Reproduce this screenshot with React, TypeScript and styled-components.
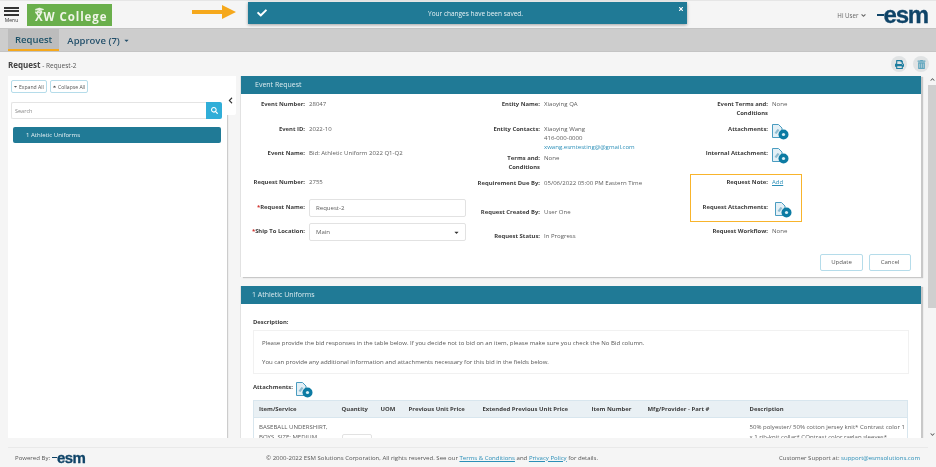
import { createGlobalStyle, styled } from 'styled-components';
import {
  FaAngleDown,
  FaCaretDown,
  FaCaretUp,
  FaCheck,
  FaChevronDown,
  FaChevronLeft,
  FaChevronUp,
  FaGraduationCap,
  FaPrint,
  FaSearch,
  FaTimes,
  FaTrashAlt,
} from 'react-icons/fa';

const GlobalStyle = createGlobalStyle`
  html, body { margin: 0; padding: 0; background: #f5f5f5; }
  * { box-sizing: border-box; }
  body { font-family: "Open Sans", "Noto Sans", sans-serif; font-size: 6.05px; color: #555; }
`;

function EsmLogo({ small }: { small?: boolean }) {
  return (
    <LogoWrap $small={small}>
      <LogoDash $small={small} />
      esm
    </LogoWrap>
  );
}

function AttachIcon({ shift }: { shift?: number }) {
  return (
    <AttachSvg $shift={shift} width="17" height="16" viewBox="0 0 17 16">
      <path d="M.5.5h6L10 4v9.5H.5z" fill="#e4f0f6" stroke="#4a9cc0" strokeWidth="1" />
      <path d="M2.5 9l3-4 2 1-3 4z" fill="#8dbbd0" />
      <circle cx="11.5" cy="10.5" r="5" fill="#0c7ba3" />
      <circle cx="11.5" cy="10.5" r="1.6" fill="#d8edf5" />
    </AttachSvg>
  );
}

function App() {
  return (
    <Page>
      <GlobalStyle />
      <Header>
        <MenuButton>
          <Burger />
          <Burger />
          <Burger />
          <MenuLabel>Menu</MenuLabel>
        </MenuButton>
        <CollegeLogo>
          <CapIcon>
            <FaGraduationCap size={9} color="#e6efdc" />
          </CapIcon>
          XW College
        </CollegeLogo>
        <HeaderRight>
          <HiUser>
            Hi User <FaAngleDown size={7} />
          </HiUser>
          <EsmLogo />
        </HeaderRight>
        <Arrow width="44" height="14" viewBox="0 0 44 14">
          <path d="M0 5h30V0l14 7-14 7V9H0z" fill="#f5a81c" />
        </Arrow>
        <Toast>
          <FaCheck size={10} color="#fff" />
          <ToastText>Your changes have been saved.</ToastText>
          <ToastClose>
            <FaTimes size={6} color="#fff" />
          </ToastClose>
        </Toast>
      </Header>

      <Nav>
        <NavItem $active>Request</NavItem>
        <NavItem>
          Approve (7) <FaCaretDown size={7} />
        </NavItem>
      </Nav>

      <TitleRow>
        <PageTitle>
          <strong>Request</strong> - Request-2
        </PageTitle>
        <RoundButtons>
          <RoundButton>
            <FaPrint size={9} color="#1c7d9f" />
          </RoundButton>
          <RoundButton>
            <FaTrashAlt size={9} color="#5fa6be" />
          </RoundButton>
        </RoundButtons>
      </TitleRow>

      <Body>
        <Sidebar>
          <ToolRow>
            <ToolButton $w={36}>
              <FaCaretDown size={5} /> Expand All
            </ToolButton>
            <ToolButton $w={38}>
              <FaCaretUp size={5} /> Collapse All
            </ToolButton>
          </ToolRow>
          <SearchRow>
            <SearchInput>Search</SearchInput>
            <SearchButton>
              <FaSearch size={7} color="#fff" />
            </SearchButton>
          </SearchRow>
          <TreeItem>1 Athletic Uniforms</TreeItem>
        </Sidebar>

        <CollapseGutter>
          <CollapseTab>
            <FaChevronLeft size={7} color="#333" />
          </CollapseTab>
        </CollapseGutter>

        <Main>
          <Panel>
            <PanelHead $indent={14}>Event Request</PanelHead>
            <FormGrid>
              <FormColumn $labelW={64}>
                <Field $h={25}>
                  <Label>Event Number:</Label>
                  <Value>28047</Value>
                </Field>
                <Field $h={24}>
                  <Label>Event ID:</Label>
                  <Value>2022-10</Value>
                </Field>
                <Field $h={29}>
                  <Label>Event Name:</Label>
                  <Value>Bid: Athletic Uniform 2022 Q1-Q2</Value>
                </Field>
                <Field $h={25}>
                  <Label>Request Number:</Label>
                  <Value>2755</Value>
                </Field>
                <Field $h={24}>
                  <Label>
                    <Required>*</Required>Request Name:
                  </Label>
                  <TextBox>Request-2</TextBox>
                </Field>
                <Field $h={20}>
                  <Label>
                    <Required>*</Required>Ship To Location:
                  </Label>
                  <TextBox>
                    Main
                    <FaCaretDown size={7} color="#333" />
                  </TextBox>
                </Field>
              </FormColumn>

              <FormColumn $labelW={74}>
                <Field $h={25}>
                  <Label>Entity Name:</Label>
                  <Value>Xiaoying QA</Value>
                </Field>
                <Field $h={29}>
                  <Label>Entity Contacts:</Label>
                  <Value>
                    Xiaoying Wang
                    <br />
                    416-000-0000
                    <br />
                    <MailLink>xwang.esmtesting@@gmail.com</MailLink>
                  </Value>
                </Field>
                <Field $h={25}>
                  <Label>
                    Terms and:
                    <br />
                    Conditions
                  </Label>
                  <Value>None</Value>
                </Field>
                <Field $h={29}>
                  <Label>Requirement Due By:</Label>
                  <Value>05/06/2022 05:00 PM Eastern Time</Value>
                </Field>
                <Field $h={24}>
                  <Label>Request Created By:</Label>
                  <Value>User One</Value>
                </Field>
                <Field $h={16}>
                  <Label>Request Status:</Label>
                  <Value>In Progress</Value>
                </Field>
              </FormColumn>

              <FormColumn $labelW={67}>
                <Field $h={25}>
                  <Label>
                    Event Terms and:
                    <br />
                    Conditions
                  </Label>
                  <Value>None</Value>
                </Field>
                <Field $h={24}>
                  <Label>Attachments:</Label>
                  <AttachIcon />
                </Field>
                <Field $h={29}>
                  <Label>Internal Attachment:</Label>
                  <AttachIcon />
                </Field>
                <Highlighted>
                  <Field $h={25}>
                    <Label>Request Note:</Label>
                    <AddLink>Add</AddLink>
                  </Field>
                  <Field $h={24}>
                    <Label>Request Attachments:</Label>
                    <AttachIcon shift={3} />
                  </Field>
                </Highlighted>
                <Field $h={16}>
                  <Label>Request Workflow:</Label>
                  <Value>None</Value>
                </Field>
              </FormColumn>
            </FormGrid>
            <Actions>
              <ActionButton $w={43}>Update</ActionButton>
              <ActionButton $w={42}>Cancel</ActionButton>
            </Actions>
          </Panel>

          <Panel>
            <PanelHead $indent={11}>1 Athletic Uniforms</PanelHead>
            <PanelBody>
              <SectionLabel>Description:</SectionLabel>
              <DescriptionBox>
                <p>
                  Please provide the bid responses in the table below. If you decide not to bid on an
                  item, please make sure you check the No Bid column.
                </p>
                <p>
                  You can provide any additional information and attachments necessary for this bid in
                  the fields below.
                </p>
              </DescriptionBox>
              <AttachRow>
                <SectionLabel>Attachments:</SectionLabel>
                <AttachIcon />
              </AttachRow>
              <ItemTable>
                <thead>
                  <tr>
                    <Th $w={83}>Item/Service</Th>
                    <Th $w={39}>Quantity</Th>
                    <Th $w={28}>UOM</Th>
                    <Th $w={74}>Previous Unit Price</Th>
                    <Th $w={109}>Extended Previous Unit Price</Th>
                    <Th $w={56}>Item Number</Th>
                    <Th $w={102}>Mfg/Provider - Part #</Th>
                    <Th>Description</Th>
                  </tr>
                </thead>
                <tbody>
                  <tr>
                    <Td>
                      BASEBALL UNDERSHIRT,
                      <br />
                      BOYS, SIZE: MEDIUM
                    </Td>
                    <Td>
                      <QtyBox />
                    </Td>
                    <Td />
                    <Td />
                    <Td />
                    <Td />
                    <Td />
                    <Td>
                      50% polyester/ 50% cotton jersey knit* Contrast color 1
                      <br />x 1 rib-knit collar* COntrast color raglan sleeves*
                    </Td>
                  </tr>
                </tbody>
              </ItemTable>
            </PanelBody>
          </Panel>
        </Main>

        <Scrollbar>
          <FaChevronUp size={5} color="#555" />
          <ScrollThumb />
          <ScrollDown>
            <FaChevronDown size={5} color="#555" />
          </ScrollDown>
        </Scrollbar>
      </Body>

      <Footer>
        <PoweredBy>
          Powered By: <EsmLogo small />
        </PoweredBy>
        <div>
          © 2000-2022 ESM Solutions Corporation, All rights reserved. See our{' '}
          <FooterLink>Terms &amp; Conditions</FooterLink> and <FooterLink>Privacy Policy</FooterLink>{' '}
          for details.
        </div>
        <div>
          Customer Support at: <MailLink>support@esmsolutions.com</MailLink>
        </div>
      </Footer>
    </Page>
  );
}

const Page = styled.div`
  width: 936px;
  height: 467px;
  overflow: hidden;
  display: flex;
  flex-direction: column;
  background: #f5f5f5;
  filter: blur(0.4px);
`;
const Header = styled.header`
  position: relative;
  height: 28px;
  flex: none;
  display: flex;
  align-items: center;
  padding: 1px 0 0 4px;
  border-top: 1px solid #e6e6e6;
`;
const MenuButton = styled.div`
  width: 15px;
  display: flex;
  flex-direction: column;
  align-items: center;
  gap: 1.5px;
`;
const Burger = styled.span`
  display: block;
  width: 15px;
  height: 2px;
  background: #333;
`;
const MenuLabel = styled.span`
  font-size: 5px;
  line-height: 6px;
  color: #333;
`;
const CollegeLogo = styled.div`
  position: relative;
  margin-left: 8px;
  width: 85px;
  height: 22px;
  background: #6aaf4c;
  color: #f0f5e8;
  font-weight: 700;
  font-size: 11.5px;
  letter-spacing: 0.9px;
  line-height: 25px;
  padding-left: 8px;
  white-space: nowrap;
`;
const CapIcon = styled.span`
  position: absolute;
  left: 8px;
  top: 2px;
  line-height: 0;
`;
const HeaderRight = styled.div`
  margin-left: auto;
  margin-right: 8px;
  display: flex;
  align-items: center;
  gap: 10px;
`;
const HiUser = styled.span`
  display: flex;
  align-items: center;
  gap: 1px;
  font-size: 6.2px;
  color: #666;
`;
const LogoWrap = styled.span<{ $small?: boolean }>`
  display: inline-flex;
  align-items: center;
  font-family: "Liberation Sans", sans-serif;
  font-weight: 700;
  font-size: ${({ $small }) => ($small ? '15px' : '24px')};
  line-height: ${({ $small }) => ($small ? '12px' : '18px')};
  letter-spacing: ${({ $small }) => ($small ? '-0.6px' : '-1.2px')};
  -webkit-text-stroke: 0.3px #0f4468;
  color: #0f4468;
`;
const LogoDash = styled.i<{ $small?: boolean }>`
  display: block;
  width: ${({ $small }) => ($small ? '5px' : '7px')};
  height: ${({ $small }) => ($small ? '1.5px' : '2.5px')};
  background: #0f4468;
`;
const Arrow = styled.svg`
  position: absolute;
  left: 192px;
  top: 4px;
`;
const Toast = styled.div`
  position: absolute;
  left: 248px;
  top: 1px;
  width: 439px;
  height: 22px;
  background: #207a96;
  box-shadow: 0 1px 3px rgba(0, 0, 0, 0.35);
  display: flex;
  align-items: center;
  padding-left: 9px;
`;
const ToastText = styled.span`
  position: absolute;
  left: 180px;
  color: #e8f2f5;
  font-size: 6.5px;
`;
const ToastClose = styled.span`
  position: absolute;
  right: 3px;
  top: 4px;
  line-height: 0;
`;
const Nav = styled.nav`
  height: 24px;
  flex: none;
  background: #cdcdcd;
  border-top: 1px solid #c4c4c4;
  border-bottom: 1px solid #c4c4c4;
  display: flex;
  padding-left: 8px;
`;
const NavItem = styled.div<{ $active?: boolean }>`
  padding: 0 ${({ $active }) => ($active ? '7px' : '8px')};
  display: flex;
  align-items: center;
  gap: 3px;
  font-size: 9.5px;
  font-weight: 600;
  color: ${({ $active }) => ($active ? '#1d5268' : '#24506b')};
  background: ${({ $active }) => ($active ? '#bcbcbc' : 'transparent')};
  border-bottom: ${({ $active }) => ($active ? '2px solid #f5a81c' : '0')};
`;
const TitleRow = styled.div`
  height: 24px;
  flex: none;
  display: flex;
  align-items: center;
  justify-content: space-between;
  padding: 0 7px 0 8px;
`;
const PageTitle = styled.div`
  font-size: 6.5px;
  color: #555;
  strong {
    font-size: 8px;
    font-weight: 700;
    color: #444;
  }
`;
const RoundButtons = styled.div`
  display: flex;
  gap: 6px;
`;
const RoundButton = styled.span`
  width: 16px;
  height: 16px;
  border-radius: 50%;
  background: #e0e3e4;
  display: flex;
  align-items: center;
  justify-content: center;
`;
const Body = styled.div`
  height: 362px;
  flex: none;
  display: flex;
  align-items: flex-start;
  padding-left: 8px;
  margin-bottom: 9px;
  overflow: hidden;
`;
const Sidebar = styled.aside`
  width: 219px;
  height: 362px;
  flex: none;
  background: #fff;
  box-shadow: 1px 1px 1px #ccc;
  padding: 4px 3px 0;
`;
const ToolRow = styled.div`
  display: flex;
  gap: 3px;
`;
const ToolButton = styled.span<{ $w: number }>`
  width: ${({ $w }) => $w}px;
  display: flex;
  align-items: center;
  gap: 1px;
  height: 13px;
  padding: 0 1px;
  font-size: 5.1px;
  white-space: nowrap;
  color: #555;
  border: 1px solid #b5dcea;
  border-radius: 2px;
`;
const SearchRow = styled.div`
  display: flex;
  margin-top: 9px;
  width: 211px;
`;
const SearchInput = styled.div`
  flex: 1;
  height: 17px;
  line-height: 16px;
  padding-left: 3px;
  font-size: 5.5px;
  color: #888;
  border: 1px solid #e4e4e4;
  border-right: 0;
  border-radius: 2px 0 0 2px;
`;
const SearchButton = styled.span`
  width: 16px;
  height: 17px;
  background: #30aed8;
  border-radius: 0 2px 2px 0;
  display: flex;
  align-items: center;
  justify-content: center;
`;
const TreeItem = styled.div`
  margin: 8px 0 0 2px;
  width: 208px;
  height: 16px;
  line-height: 16px;
  padding-left: 13px;
  background: #207a96;
  border-radius: 2px;
  color: #e8f2f5;
`;
const CollapseGutter = styled.div`
  width: 14px;
  flex: none;
`;
const CollapseTab = styled.div`
  width: 9px;
  height: 39px;
  background: #fff;
  border-radius: 0 0 2px 0;
  display: flex;
  align-items: flex-end;
  justify-content: flex-start;
  padding: 0 0 11px 0;
  line-height: 0;
`;
const Main = styled.main`
  width: 680px;
  flex: none;
  display: flex;
  flex-direction: column;
  gap: 9px;
`;
const Panel = styled.section`
  background: #fff;
  box-shadow: 2px 1px 1px #c8c8c8, -1px 0 0 #e2e2e2;
`;
const PanelHead = styled.div<{ $indent: number }>`
  height: 18px;
  line-height: 18px;
  padding-left: ${({ $indent }) => $indent}px;
  background: #207a96;
  color: #dcebef;
  font-size: 7px;
`;
const FormGrid = styled.div`
  display: grid;
  grid-template-columns: 225px 235px 1fr;
  padding-top: 6px;
`;
const FormColumn = styled.div<{ $labelW: number }>`
  --label-w: ${({ $labelW }) => $labelW}px;
  display: flex;
  flex-direction: column;
`;
const Field = styled.div<{ $h: number }>`
  height: ${({ $h }) => $h}px;
  display: flex;
  gap: 4px;
  line-height: 9px;
`;
const Label = styled.div`
  width: var(--label-w);
  flex: none;
  text-align: right;
  font-size: 5.9px;
  font-weight: 700;
  color: #3c3c3c;
  white-space: nowrap;
`;
const Value = styled.div`
  color: #5c5c5c;
  white-space: nowrap;
`;
const Required = styled.span`
  color: #d0312d;
`;
const TextBox = styled.div`
  width: 157px;
  height: 18px;
  padding: 0 5px 0 6px;
  margin-top: -4px;
  display: flex;
  justify-content: space-between;
  align-items: center;
  border: 1px solid #e2e2e2;
  border-radius: 2px;
  color: #5c5c5c;
`;
const AttachSvg = styled.svg<{ $shift?: number }>`
  margin: -1px 0 0 ${({ $shift }) => $shift ?? 0}px;
  flex: none;
`;
const Highlighted = styled.div`
  position: relative;
  width: 101px;
  &::after {
    content: '';
    position: absolute;
    inset: -4px 0 5px -11px;
    border: 1.5px solid #f8b42c;
    pointer-events: none;
  }
`;
const AddLink = styled.a`
  color: #2b8fb8;
  text-decoration: underline;
`;
const MailLink = styled.span`
  color: #2b8fb8;
`;
const FooterLink = styled.a`
  color: #2b8fb8;
  text-decoration: underline;
`;
const Actions = styled.div`
  display: flex;
  justify-content: flex-end;
  gap: 6px;
  padding: 6px 10px 6px 0;
`;
const ActionButton = styled.span<{ $w: number }>`
  width: ${({ $w }) => $w}px;
  height: 17px;
  line-height: 15px;
  text-align: center;
  border: 1px solid #b5dcea;
  border-radius: 2px;
  color: #555;
`;
const PanelBody = styled.div`
  padding: 14px 12px 0;
`;
const SectionLabel = styled.div`
  font-size: 5.9px;
  line-height: 8px;
  font-weight: 700;
  color: #3c3c3c;
`;
const DescriptionBox = styled.div`
  margin-top: 4px;
  height: 44px;
  border: 1px solid #f1f1f1;
  padding: 8px;
  p {
    margin: 0 0 10px;
    line-height: 9px;
    color: #555;
  }
`;
const AttachRow = styled.div`
  display: flex;
  align-items: flex-start;
  gap: 3px;
  margin-top: 8px;
  padding-top: 1px;
`;
const ItemTable = styled.table`
  width: 655px;
  margin-top: 2px;
  border-collapse: collapse;
  table-layout: fixed;
  border-left: 1px solid #d8e6ee;
  border-right: 1px solid #d8e6ee;
`;
const Th = styled.th<{ $w?: number }>`
  width: ${({ $w }) => ($w ? `${$w}px` : 'auto')};
  height: 17px;
  padding: 0 0 0 5px;
  background: #e9f0f4;
  border-top: 1px solid #d8e6ee;
  border-bottom: 1px solid #d8e6ee;
  font-size: 5.95px;
  font-weight: 700;
  text-align: left;
  color: #3c3c3c;
  white-space: nowrap;
`;
const Td = styled.td`
  padding: 4px 0 0 5px;
  vertical-align: top;
  line-height: 10px;
  color: #5c5c5c;
  white-space: nowrap;
`;
const QtyBox = styled.div`
  width: 30px;
  height: 17px;
  margin-top: 12px;
  border: 1px solid #e2e2e2;
  border-radius: 2px;
`;
const Scrollbar = styled.div`
  margin-left: 7px;
  width: 8px;
  height: 362px;
  padding-top: 1px;
  display: flex;
  flex-direction: column;
  align-items: center;
  gap: 3px;
`;
const ScrollThumb = styled.div`
  width: 8px;
  height: 223px;
  background: #cfcfcf;
`;
const ScrollDown = styled.span`
  margin-top: auto;
  margin-bottom: 1px;
  line-height: 0;
`;
const Footer = styled.footer`
  height: 20px;
  flex: none;
  margin: 0 8px;
  border-top: 1px solid #e9e9e9;
  display: flex;
  align-items: center;
  justify-content: space-between;
  padding: 0 8px 0 7px;
  color: #555;
`;
const PoweredBy = styled.div`
  display: flex;
  align-items: center;
  gap: 2px;
`;

export default App;
